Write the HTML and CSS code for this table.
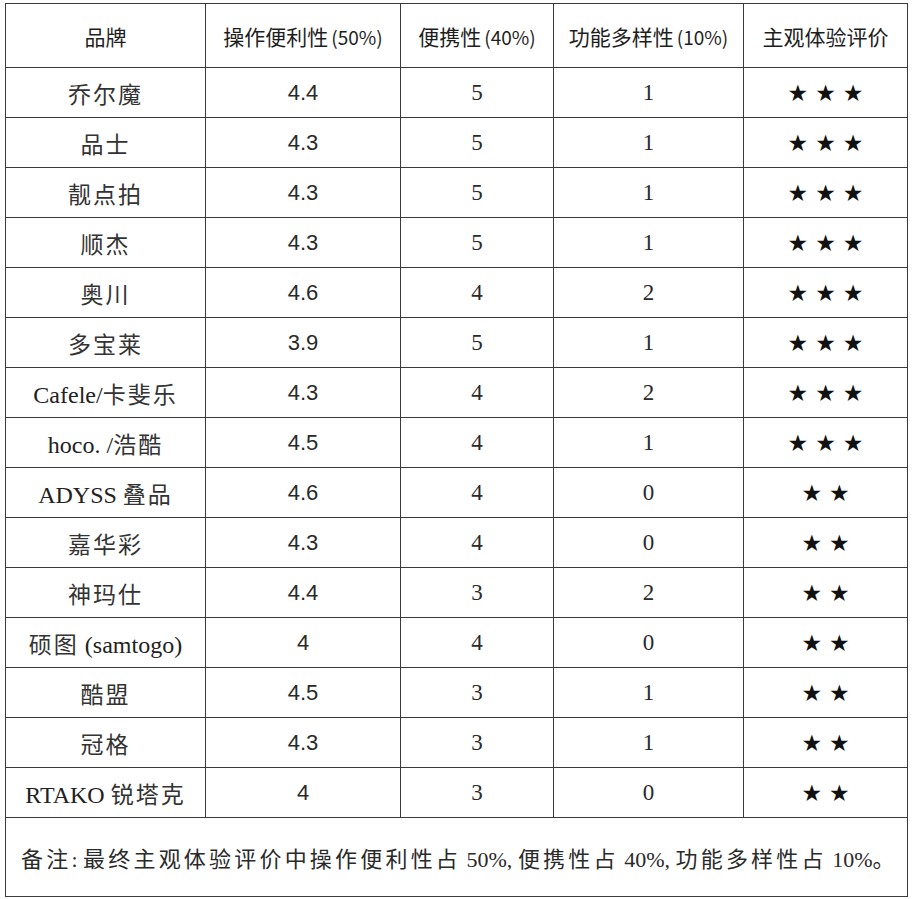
FILE: index.html
```html
<!DOCTYPE html>
<html lang="zh-CN">
<head>
<meta charset="utf-8">
<title>品牌评价表</title>
<link rel="stylesheet" href="styles.css">
</head>
<body>
<table class="grid">
  <colgroup>
    <col class="c1"><col class="c2"><col class="c3"><col class="c4"><col class="c5">
  </colgroup>
  <thead>
    <tr>
      <th>品牌</th>
      <th>操作便利性<span class="par">(50%)</span></th>
      <th>便携性<span class="par">(40%)</span></th>
      <th>功能多样性<span class="par">(10%)</span></th>
      <th>主观体验评价</th>
    </tr>
  </thead>
  <tbody>
    <tr><td class="brand">乔尔魔</td><td class="num">4.4</td><td class="ser">5</td><td class="ser">1</td><td class="stars">★★★</td></tr>
    <tr><td class="brand">品士</td><td class="num">4.3</td><td class="ser">5</td><td class="ser">1</td><td class="stars">★★★</td></tr>
    <tr><td class="brand">靓点拍</td><td class="num">4.3</td><td class="ser">5</td><td class="ser">1</td><td class="stars">★★★</td></tr>
    <tr><td class="brand">顺杰</td><td class="num">4.3</td><td class="ser">5</td><td class="ser">1</td><td class="stars">★★★</td></tr>
    <tr><td class="brand">奥川</td><td class="num">4.6</td><td class="ser">4</td><td class="ser">2</td><td class="stars">★★★</td></tr>
    <tr><td class="brand">多宝莱</td><td class="num">3.9</td><td class="ser">5</td><td class="ser">1</td><td class="stars">★★★</td></tr>
    <tr><td class="brand"><span class="lat">Cafele/</span>卡斐乐</td><td class="num">4.3</td><td class="ser">4</td><td class="ser">2</td><td class="stars">★★★</td></tr>
    <tr><td class="brand"><span class="lat">hoco. /</span>浩酷</td><td class="num">4.5</td><td class="ser">4</td><td class="ser">1</td><td class="stars">★★★</td></tr>
    <tr><td class="brand"><span class="lat">ADYSS </span>叠品</td><td class="num">4.6</td><td class="ser">4</td><td class="ser">0</td><td class="stars">★★</td></tr>
    <tr><td class="brand">嘉华彩</td><td class="num">4.3</td><td class="ser">4</td><td class="ser">0</td><td class="stars">★★</td></tr>
    <tr><td class="brand">神玛仕</td><td class="num">4.4</td><td class="ser">3</td><td class="ser">2</td><td class="stars">★★</td></tr>
    <tr><td class="brand">硕图<span class="lat"> (samtogo)</span></td><td class="num">4</td><td class="ser">4</td><td class="ser">0</td><td class="stars">★★</td></tr>
    <tr><td class="brand">酷盟</td><td class="num">4.5</td><td class="ser">3</td><td class="ser">1</td><td class="stars">★★</td></tr>
    <tr><td class="brand">冠格</td><td class="num">4.3</td><td class="ser">3</td><td class="ser">1</td><td class="stars">★★</td></tr>
    <tr><td class="brand"><span class="lat">RTAKO </span>锐塔克</td><td class="num">4</td><td class="ser">3</td><td class="ser">0</td><td class="stars">★★</td></tr>
  </tbody>
  <tfoot>
    <tr><td class="note" colspan="5">备注<span class="lat">: </span>最终主观体验评价中操作便利性占<span class="lat"> 50%, </span>便携性占<span class="lat"> 40%, </span>功能多样性占<span class="lat"> 10%</span>。</td></tr>
  </tfoot>
</table>
</body>
</html>
```

FILE: styles.css
```css
html, body {
  margin: 0;
  padding: 0;
  background: #ffffff;
}

.grid {
  margin: 3px 0 0 5px;
  width: 902px;
  table-layout: fixed;
  border-collapse: collapse;
  color: #222222;
}

.c1 { width: 200px; }
.c2 { width: 195px; }
.c3 { width: 153px; }
.c4 { width: 190px; }
.c5 { width: 164px; }

.grid th,
.grid td {
  border: 1px solid #3a3a3a;
  padding: 0;
  text-align: center;
  vertical-align: middle;
}

.grid th {
  height: 63px;
  font-family: "Noto Sans CJK SC", "Liberation Sans", sans-serif;
  font-weight: normal;
  font-size: 21px;
  color: #1e1e1e;
}

.par {
  margin-left: 3px;
  font-size: 19px;
}

.grid td {
  height: 49px;
}

.brand {
  font-family: "Noto Sans CJK SC", sans-serif;
  font-size: 23px;
  letter-spacing: 2px;
  color: #333333;
  padding-top: 2px;
}

.lat {
  font-family: "Liberation Serif", serif;
  letter-spacing: 0;
}

.brand .lat {
  font-size: 24px;
  color: #222222;
}

.num {
  font-family: "Liberation Sans", sans-serif;
  font-size: 22px;
  color: #2a2a2a;
}

.ser {
  font-family: "Liberation Serif", serif;
  font-size: 23px;
  color: #2a2a2a;
}

.stars {
  font-family: "DejaVu Sans", sans-serif;
  font-size: 23px;
  letter-spacing: 7px;
  text-indent: 7px;
  color: #111111;
}

.grid td.note {
  height: 78px;
  text-align: left;
  padding-left: 15px;
  white-space: nowrap;
  font-family: "Noto Sans CJK SC", sans-serif;
  font-size: 22px;
  letter-spacing: 3.2px;
  color: #2a2a2a;
}

.note .lat {
  font-size: 22px;
}
```
